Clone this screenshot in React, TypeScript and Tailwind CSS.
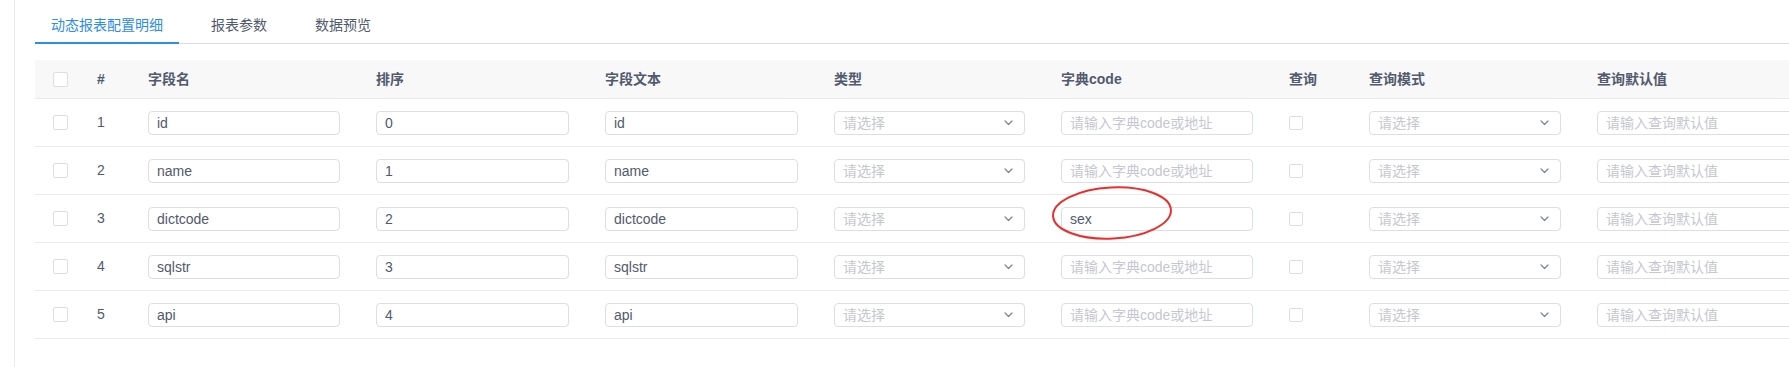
import React from "react";

const rows = [
  { idx: 1, name: "id", order: "0", text: "id", dict: "" },
  { idx: 2, name: "name", order: "1", text: "name", dict: "" },
  { idx: 3, name: "dictcode", order: "2", text: "dictcode", dict: "sex" },
  { idx: 4, name: "sqlstr", order: "3", text: "sqlstr", dict: "" },
  { idx: 5, name: "api", order: "4", text: "api", dict: "" },
];

const GRID =
  "grid grid-cols-[44px_51px_228px_229px_229px_227px_228px_80px_228px_228px]";

function Checkbox({ small }: { small?: boolean }) {
  return (
    <div
      className={
        small
          ? "h-[14px] w-[14px] rounded-[2px] border border-[#dcdee2] bg-white"
          : "h-[15px] w-[15px] rounded-[2px] border border-[#dcdee2] bg-white"
      }
    />
  );
}

function Input({ value, placeholder }: { value?: string; placeholder?: string }) {
  return (
    <div className="flex h-[24px] w-full items-center rounded-[4px] border border-[#dcdee2] bg-white px-[8px]">
      {value ? (
        <span className="text-[14px] leading-none text-[#515a6e]">{value}</span>
      ) : (
        <span className="whitespace-nowrap text-[14px] leading-none text-[#c5c8ce]">
          {placeholder}
        </span>
      )}
    </div>
  );
}

function Select() {
  return (
    <div className="flex h-[24px] w-full items-center justify-between rounded-[4px] border border-[#dcdee2] bg-white pl-[8px] pr-[11px]">
      <span className="text-[14px] leading-none text-[#c5c8ce]">请选择</span>
      <svg width="9" height="6" viewBox="0 0 9 6" fill="none">
        <polyline
          points="1,1 4.5,4.5 8,1"
          stroke="#808695"
          strokeWidth="1.3"
          strokeLinecap="round"
          strokeLinejoin="round"
        />
      </svg>
    </div>
  );
}

export default function App() {
  return (
    <div className="h-[367px] w-[1789px] overflow-hidden bg-white pl-[14px] font-['Liberation_Sans','Noto_Sans_CJK_SC',sans-serif]">
      <div className="h-full border-l border-[#e8eaec] pl-[20px]">
        {/* Tabs */}
        <div className="flex h-[44px] border-b border-[#dcdee2]">
          <div className="relative mr-[16px] flex h-[43px] items-center px-[16px] pt-[8px] text-[14px] text-[#2d8cf0]">
            动态报表配置明细
            <div className="absolute -bottom-px left-0 right-0 h-[2px] bg-[#2d8cf0]" />
          </div>
          <div className="mr-[16px] flex h-[43px] items-center px-[16px] pt-[8px] text-[14px] text-[#515a6e]">
            报表参数
          </div>
          <div className="mr-[16px] flex h-[43px] items-center px-[16px] pt-[8px] text-[14px] text-[#515a6e]">
            数据预览
          </div>
        </div>

        {/* Table */}
        <div className="mt-[16px] w-max">
          <div
            className={`${GRID} h-[39px] items-center border-b border-[#e8eaec] bg-[#f8f8f9] text-[14px] font-semibold text-[#515a6e]`}
          >
            <div className="pl-[18px]">
              <Checkbox />
            </div>
            <div className="pl-[18px]">#</div>
            <div className="pl-[18px]">字段名</div>
            <div className="pl-[18px]">排序</div>
            <div className="pl-[18px]">字段文本</div>
            <div className="pl-[18px]">类型</div>
            <div className="pl-[18px]">字典code</div>
            <div className="pl-[18px]">查询</div>
            <div className="pl-[18px]">查询模式</div>
            <div className="pl-[18px]">查询默认值</div>
          </div>

          {rows.map((r) => (
            <div
              key={r.idx}
              className={`${GRID} h-[48px] items-center border-b border-[#e8eaec] text-[14px] text-[#515a6e]`}
            >
              <div className="pl-[18px]">
                <Checkbox />
              </div>
              <div className="pl-[18px]">{r.idx}</div>
              <div className="px-[18px]">
                <Input value={r.name} />
              </div>
              <div className="px-[18px]">
                <Input value={r.order} />
              </div>
              <div className="px-[18px]">
                <Input value={r.text} />
              </div>
              <div className="px-[18px]">
                <Select />
              </div>
              <div className="relative px-[18px]">
                <Input value={r.dict} placeholder="请输入字典code或地址" />
                {r.dict ? (
                  <svg
                    className="pointer-events-none absolute left-[7px] top-[-22px]"
                    width="124"
                    height="56"
                    viewBox="0 0 124 56"
                    fill="none"
                  >
                    <ellipse
                      cx="62"
                      cy="28"
                      rx="59"
                      ry="25.5"
                      transform="rotate(-3 62 28)"
                      stroke="#ec2d2d"
                      strokeWidth="2"
                    />
                  </svg>
                ) : null}
              </div>
              <div className="pl-[18px]">
                <Checkbox small />
              </div>
              <div className="px-[18px]">
                <Select />
              </div>
              <div className="pl-[18px]">
                <Input placeholder="请输入查询默认值" />
              </div>
            </div>
          ))}
        </div>
      </div>
    </div>
  );
}
